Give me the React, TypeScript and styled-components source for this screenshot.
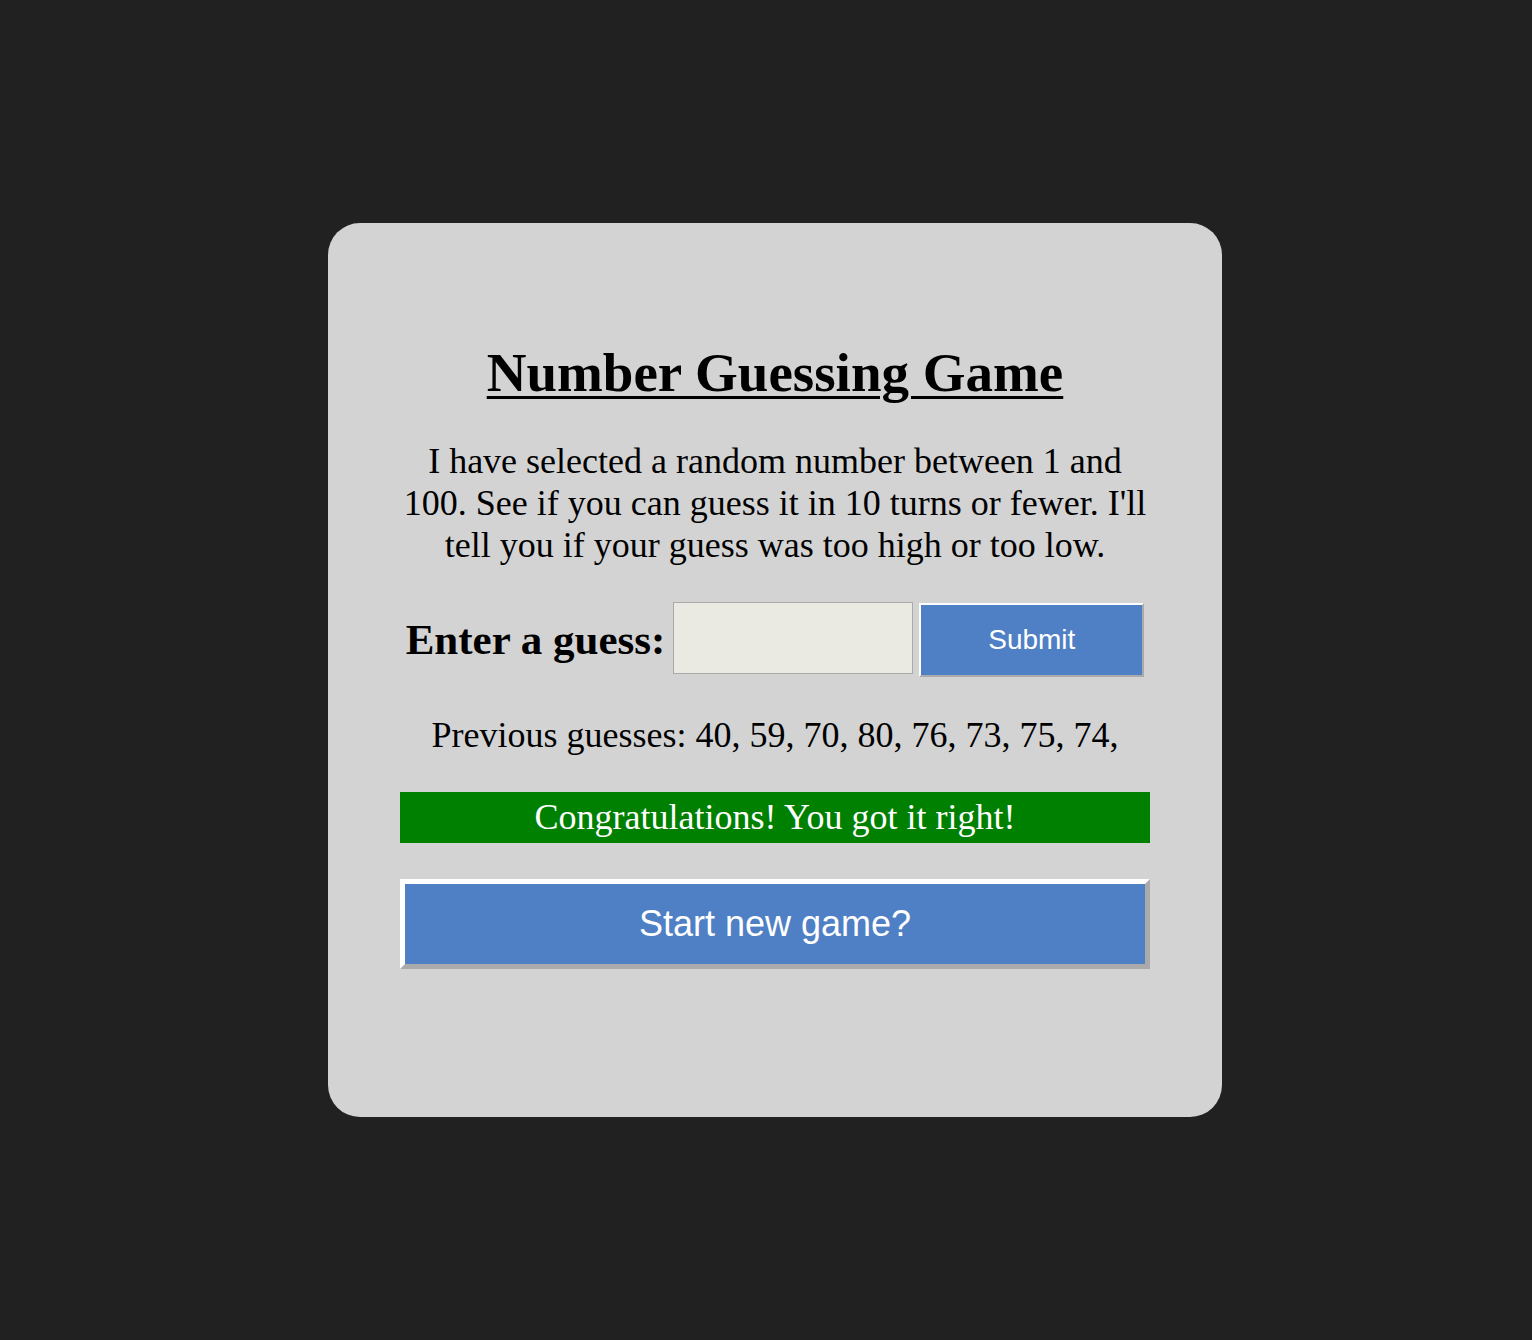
import React, { useState } from "react";
import styled, { createGlobalStyle } from "styled-components";

const GlobalStyle = createGlobalStyle`
  html, body {
    margin: 0;
    padding: 0;
    background: #212121;
  }
  body {
    font-family: "Liberation Serif", "Times New Roman", serif;
  }
`;

const Page = styled.div`
  min-height: 100vh;
  display: flex;
  align-items: center;
  justify-content: center;
  padding-left: 18px;
  box-sizing: border-box;
`;

const Card = styled.main`
  width: 894px;
  height: 894px;
  box-sizing: border-box;
  padding: 118px 72px 0;
  background: #d3d3d3;
  border-radius: 32px;
  display: flex;
  flex-direction: column;
  align-items: stretch;
  gap: 36px;
  text-align: center;
`;

const Title = styled.h1`
  margin: 0;
  font-size: 55px;
  font-weight: bold;
  text-decoration: underline;
  text-decoration-thickness: 3px;
  text-underline-offset: 5px;
  color: #000;
`;

const Text = styled.p`
  margin: 0;
  font-size: 36px;
  color: #000;
`;

const GuessRow = styled.form`
  margin: 0 0 1px;
  height: 75px;
  display: flex;
  align-items: flex-start;
  justify-content: center;
`;

const Label = styled.label`
  align-self: center;
  font-size: 43px;
  font-weight: bold;
  margin-right: 8px;
  color: #000;
`;

const GuessInput = styled.input`
  width: 240px;
  height: 72px;
  box-sizing: border-box;
  border: 1px solid #aaa;
  background: #eaeae3;
  font-size: 28px;
  margin: 0 6px 0 0;
  padding: 0 8px;
  outline: none;
`;

const BlueButton = styled.button<{ $big?: boolean }>`
  background: #4f7fc4;
  color: #fff;
  font-family: "Liberation Sans", Arial, sans-serif;
  font-size: ${(p) => (p.$big ? "36px" : "28px")};
  width: ${(p) => (p.$big ? "100%" : "225px")};
  height: ${(p) => (p.$big ? "90px" : "74px")};
  box-sizing: border-box;
  border-style: solid;
  border-width: ${(p) => (p.$big ? "5px" : "2px")};
  border-color: #fff #aaa #aaa #fff;
  padding: 0;
  margin: ${(p) => (p.$big ? "0" : "1px 0 0")};
  cursor: pointer;
`;

const Banner = styled.div`
  background: #008000;
  color: #fff;
  font-size: 36px;
  line-height: 41px;
  padding: 5px 0;
`;

export default function App() {
  const [value, setValue] = useState("");
  const guesses = [40, 59, 70, 80, 76, 73, 75, 74];
  return (
    <>
      <GlobalStyle />
      <Page>
        <Card>
          <Title>Number Guessing Game</Title>
          <Text>
            I have selected a random number between 1 and 100. See if you can
            guess it in 10 turns or fewer. I'll tell you if your guess was too
            high or too low.
          </Text>
          <GuessRow onSubmit={(e) => e.preventDefault()}>
            <Label htmlFor="guess">Enter a guess:</Label>
            <GuessInput
              id="guess"
              type="number"
              value={value}
              onChange={(e) => setValue(e.target.value)}
            />
            <BlueButton type="submit">Submit</BlueButton>
          </GuessRow>
          <Text>Previous guesses: {guesses.map((g) => `${g}, `).join("")}</Text>
          <Banner>Congratulations! You got it right!</Banner>
          <BlueButton $big type="button">
            Start new game?
          </BlueButton>
        </Card>
      </Page>
    </>
  );
}
